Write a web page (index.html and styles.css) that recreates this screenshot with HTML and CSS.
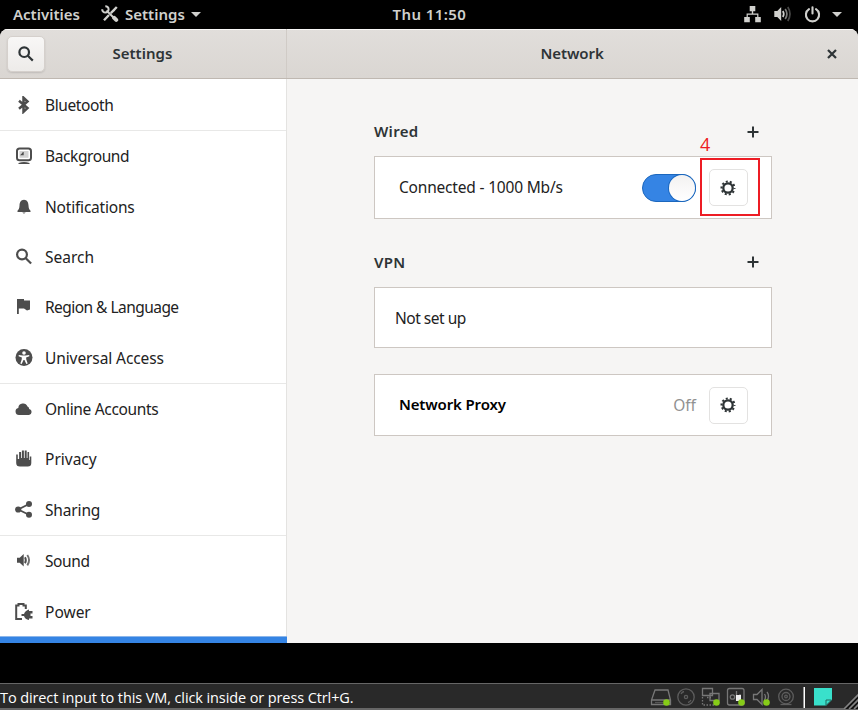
FILE: index.html
```html
<!DOCTYPE html>
<html lang="en">
<head>
<meta charset="utf-8">
<title>Settings – Network</title>
<link rel="stylesheet" href="styles.css">
</head>
<body>
<div class="screen">
  <header class="topbar">
    <span class="t-activities">Activities</span>
    <svg class="tools" width="18" height="18" viewBox="0 0 18 18"><g fill="none" stroke="#d0d0cd"><path d="M5.5 5.5L13 13" stroke-width="2"/><path d="M13.2 12.9l2 2" stroke-width="4" stroke-linecap="round"/><path d="M15.8 2L9.8 8.2M8 10l-5 5.3" stroke-width="2.4"/><path d="M4.3 1.2A3.2 3.2 0 1 1 1.2 4.3" stroke-width="2"/><path d="M12.2 4.7l1.3 1.3" stroke-width="2"/></g></svg>
    <span class="t-app">Settings</span>
    <i class="caret"></i>
    <span class="t-clock">Thu 11:50</span>
    <div class="tray">
      <svg width="17" height="17" viewBox="0 0 17 17"><path fill="#d0d0cd" d="M5.7 0h5.6v5.200H9.200v2.300h5.200V11h2.400v5.300h-5.600V11h2V8.700H3.800V11h2v5.300H.2V11h2.400V7.500h5.200V5.200H5.700z"/></svg>
      <svg width="18" height="16" viewBox="0 0 18 16"><path fill="#d0d0cd" d="M.3 5h3L7.2 1v14L3.300 11h-3z"/><g fill="none" stroke="#d0d0cd" stroke-width="1.700"><path d="M8.800 5q2 3 0 6"/><path opacity=".6" d="M11.200 3q3.400 5 0 10"/><path opacity=".35" d="M13.800 1q4.400 7 0 14"/></g></svg>
      <svg width="17" height="17" viewBox="0 0 17 17"><g fill="none" stroke="#d0d0cd" stroke-width="2.100" stroke-linecap="round"><path d="M5 3.200a6.600 6.600 0 1 0 7 0M8.500 1.200v6.300"/></g></svg>
      <i class="caret"></i>
    </div>
  </header>

  <div class="window">
    <div class="titlebar">
      <div class="title-left">
        <button class="search-btn"><svg width="16" height="16" viewBox="0 0 16 16"><g fill="none" stroke="#2e3436" stroke-width="2.200"><circle cx="6.200" cy="6.200" r="4.800"/><path d="M9.800 9.800l5 4.800"/></g></svg></button>
        <h1 class="t-settings">Settings</h1>
      </div>
      <div class="title-right">
        <h1 class="t-network">Network</h1>
        <svg class="close" width="10" height="10" viewBox="0 0 10 10"><path d="M1 1l8 8M9 1l-8 8" stroke="#2e3436" stroke-width="2.200"/></svg>
      </div>
    </div>

    <div class="body">
      <nav class="sidebar">
        <div class="group g1">
          <a><svg viewBox="0 0 18 18"><path d="M4 4.700l8.500 7.300-4 3.800V1.700l4 3.800L4 12.800" fill="none" stroke="#4d4d4d" stroke-width="2.500"/></svg><span class="n-bluetooth">Bluetooth</span></a>
        </div>
        <div class="group g5">
          <a><svg viewBox="0 0 18 18"><rect x="2" y="1.500" width="14" height="11.800" rx="2.600" fill="#fff" stroke="#4d4d4d" stroke-width="2"/><rect x="4.500" y="4" width="9" height="6.800" fill="#d2d2d2"/><path d="M5 8.200l3-2.900v2.900zM7.500 5h1.200v3.200H7.500z" fill="#4d4d4d"/><path d="M3.500 16q5.500-2.200 11 0v1h-11z" fill="#4d4d4d"/></svg><span class="n-background">Background</span></a>
          <a><svg viewBox="0 0 18 18"><path d="M9 1.800C5.800 2 4.700 4.400 4.500 7.500c-.2 3-.7 4-2 5.200V14h13v-1.300c-1.300-1.200-1.800-2.200-2-5.200C13.300 4.400 12.200 2 9 1.800zM7.300 14.500h3.400q-1.700 2-3.400 0z" fill="#4d4d4d"/></svg><span class="n-notifications">Notifications</span></a>
          <a><svg viewBox="0 0 18 18"><g fill="none" stroke="#4d4d4d" stroke-width="2.200"><circle cx="7" cy="6.500" r="4.900"/><path d="M10.500 10l5.600 5.500"/></g></svg><span>Search</span></a>
          <a><svg viewBox="0 0 18 18"><path d="M2 1h7v1.500h6v9l-3 1-3-2H3.800V16H2z" fill="#4d4d4d"/></svg><span class="n-region">Region &amp; Language</span></a>
          <a><svg viewBox="0 0 18 18"><circle cx="9" cy="8.500" r="8.500" fill="#4d4d4d"/><circle cx="9" cy="4" r="1.800" fill="#fff"/><path d="M3.800 6l3.700.6h3L14.200 6l.2 1.200-3.300 1.200.2 2.200 1.400 4-1.400.5L9.500 11h-1l-1.800 4.100-1.400-.5 1.400-4 .2-2.200-3.300-1.200z" fill="#fff"/></svg><span class="n-universal">Universal Access</span></a>
        </div>
        <div class="group g3">
          <a><svg viewBox="0 0 18 18"><path d="M4 15a3.600 3.600 0 0 1-.7-7.100A4.800 4.800 0 0 1 12.500 6.500 2.500 2.500 0 0 1 14.200 9 3.050 3.050 0 0 1 14 15z" fill="#4d4d4d"/></svg><span class="n-online">Online Accounts</span></a>
          <a><svg viewBox="0 0 18 18"><path d="M1.200 4.500h1.600V9h1.300V2h2v6h.8V.5h2V8h.8V.5h2V8h.8V2h1.600v8h.7V6.500h1.500V13q0 3.500-3.500 3.500H5Q1.200 16.500 1.200 13z" fill="#4d4d4d"/></svg><span>Privacy</span></a>
          <a><svg viewBox="0 0 18 18"><g fill="#4d4d4d"><circle cx="3.200" cy="8.500" r="3.100"/><circle cx="14" cy="3" r="3"/><circle cx="14" cy="13.800" r="3"/></g><path d="M14 3L3.200 8.500 14 13.800" fill="none" stroke="#4d4d4d" stroke-width="1.800"/></svg><span class="n-sharing">Sharing</span></a>
        </div>
        <div class="group g2">
          <a><svg viewBox="0 0 18 18"><path fill="#4d4d4d" d="M2 5.700h2.700L8.700 2v12.400l-4-3.600H2z"/><g fill="none" stroke="#4d4d4d" stroke-width="1.900"><path d="M10 5.200q1.700 3 0 6"/><path opacity=".8" d="M12.300 3q3.600 5.200 0 10.400"/></g></svg><span class="n-sound">Sound</span></a>
          <a><svg viewBox="0 0 18 18"><path d="M7 16H1.200V2.500h2.300V1h5v1.500h2.300V6" fill="none" stroke="#4d4d4d" stroke-width="2"/><path d="M6.500 11H9q1-3.500 5-4.500V8h3.500v2.500h-2v2.500h2v2.500H14V17q-4-.5-5-4H6.500z" fill="#4d4d4d"/></svg><span>Power</span></a>
        </div>
        <div class="selected"></div>
      </nav>

      <main class="content">
        <div class="head"><h2 class="t-wired">Wired</h2><svg width="12" height="12" viewBox="0 0 12 12"><path d="M6 .5v11M.5 6h11" stroke="#2e3436" stroke-width="2"/></svg></div>
        <section class="card wired">
          <span class="t-conn">Connected - 1000 Mb/s</span>
          <div class="switch"><i></i></div>
          <button class="gear"><svg width="16" height="16" viewBox="0 0 16 16"><g fill="none" stroke="#2e3436"><circle cx="8" cy="8" r="4.700" stroke-width="2.300"/><circle cx="8" cy="8" r="6.500" stroke-width="2" stroke-dasharray="2.050 2.034" stroke-dashoffset="1.025"/></g></svg></button>
          <div class="mark"></div><b class="num">4</b>
        </section>
        <div class="head vpn"><h2 class="t-vpn">VPN</h2><svg width="12" height="12" viewBox="0 0 12 12"><path d="M6 .5v11M.5 6h11" stroke="#2e3436" stroke-width="2"/></svg></div>
        <section class="card empty"><span class="t-not">Not set up</span></section>
        <section class="card proxy">
          <strong class="t-proxy">Network Proxy</strong>
          <span class="t-off">Off</span>
          <button class="gear"><svg width="16" height="16" viewBox="0 0 16 16"><g fill="none" stroke="#2e3436"><circle cx="8" cy="8" r="4.700" stroke-width="2.300"/><circle cx="8" cy="8" r="6.500" stroke-width="2" stroke-dasharray="2.050 2.034" stroke-dashoffset="1.025"/></g></svg></button>
        </section>
      </main>
    </div>
  </div>

  <footer class="status">
    <span class="t-status">To direct input to this VM, click inside or press Ctrl+G.</span>
    <svg class="devices" width="208" height="25" viewBox="650 684 208 25">
      <g fill="none" stroke="#777" stroke-width="1.300">
        <path d="M655 690h13l2.500 10v4.500h-19V700zM651.500 700h19"/><path d="M655 702.500h8" stroke="#555"/>
        <g stroke="#5d5d5d"><circle cx="686" cy="697" r="8.200"/><circle cx="686" cy="697" r="1.600"/><path d="M681 694q1-2 3-2.500M691 700q-1 2-3 2.500"/></g>
        <path d="M702.500 688.500h10v7h-10zM710 693.500h9v7h-9z"/><path d="M707 697.500h4M702.500 697v8h13" stroke-dasharray="1.500 1.500"/>
        <rect x="727.500" y="688.500" width="16.500" height="16.500" rx="2"/><circle cx="732.500" cy="697" r="2.200"/><path d="M736.500 691v10M740 694v5"/>
        <path d="M753.500 694.500h3.500l5-5v15l-5-5h-3.500zM764.500 694q2 3 0 6M767 692q3 4 0 9"/>
        <g stroke="#5d5d5d"><circle cx="786" cy="696.500" r="7.300"/><circle cx="786" cy="696.500" r="4"/><circle cx="786" cy="696.500" r="1.300"/><path d="M780.500 704.500h11"/></g>
      </g>
      <path d="M736 695h5v6h-5z" fill="#fff" opacity=".9"/>
      <g fill="#86cb18"><circle cx="666.500" cy="702.500" r="3.300"/><circle cx="716.500" cy="702.500" r="3.300"/><circle cx="741.500" cy="702.500" r="3.300"/><circle cx="766.500" cy="702.500" r="3.300"/></g>
      <path d="M803.500 687h1.500v21h-1.500z" fill="#fff"/>
      <path d="M814 688h18v11.500l-6 6h-12z" fill="#39e0cb"/><path d="M826 705.500V700h5.500z" fill="#39e0cb" stroke="#22685f" stroke-width="1"/>
      <path d="M844 709l14-14v14z" fill="#111"/><path d="M844 709l15-15M849 709l10-10M854 709l5-5" stroke="#858585" stroke-width="1.600"/>
    </svg>
  </footer>
</div>
</body>
</html>
```
FILE: styles.css
```css
* { box-sizing: border-box; }
body { margin: 0; background: #000; font: 15.5px/20px "Noto Sans", "Open Sans", sans-serif; color: #2e3436; overflow: hidden; }
h1, h2 { margin: 0; font-size: 15px; line-height: 20px; font-weight: 600; }
button { padding: 0; display: grid; place-items: center; }
svg { display: block; flex: none; }
span, h1, h2, strong { white-space: nowrap; }
.screen { width: 858px; height: 710px; display: flex; flex-direction: column; }

.topbar { height: 29px; display: flex; align-items: center; color: #d0d0cd; font-size: 15px; font-weight: 600; padding: 0 16px 1px 13px; flex: none; }
.tools { margin-left: 21px; margin-right: 6px; }
.t-activities { width: 67px; }
.t-app { width: 61px; }
.topbar .caret { border: 5px solid transparent; border-top-color: #d0d0cd; border-bottom: 0; margin-left: 5px; }
.t-clock { margin-left: 191.5px; letter-spacing: .4px; }
.tray { margin-left: auto; display: flex; align-items: center; }
.tray svg:nth-child(2) { margin-left: 13px; }
.tray svg:nth-child(3) { margin-left: 12px; }
.tray .caret { margin-left: 11px; }

.window { height: 614px; background: #f6f5f4; border-radius: 8px 8px 0 0; overflow: hidden; flex: none; }
.titlebar { height: 50px; display: flex; background: linear-gradient(#e1dedb, #dad6d2); border-bottom: 1px solid #bfb8b1; box-shadow: inset 0 1px #f9f8f7; }
.titlebar h1 { padding-bottom: 2px; }
.title-left { width: 287px; border-right: 1px solid #d0cbc6; display: flex; align-items: center; padding-left: 7px; }
.search-btn { width: 38px; height: 36px; border: 1px solid #d5d0cc; border-radius: 5px; background: linear-gradient(#f8f7f6, #edebe9); box-shadow: 0 1px 2px rgba(0,0,0,.13); }
.t-settings { margin-left: 67.5px; }
.title-right { flex: 1; display: flex; align-items: center; padding-left: 253.5px; padding-right: 21px; }
.t-network { letter-spacing: -.1px; }
.close { margin-left: auto; }

.body { display: flex; height: 564px; }
.sidebar { width: 287px; background: #fff; border-right: 1px solid #e4e3e1; display: flex; flex-direction: column; }
.group { display: flex; flex-direction: column; border-bottom: 1px solid #e8e8e7; }
.group a { flex: 1; display: flex; align-items: center; padding-left: 15px; gap: 12px; color: #222; }
.group svg { width: 18px; height: 18px; }
.g1 { height: 52px; }
.g5 { height: 253px; }
.g3 { height: 152px; }
.g2 { height: 101px; border: 0; margin-bottom: -1px; }
.selected { flex: 1; margin-right: -1px; background: #3584e4; border-top: 1px solid #8cb6ea; }
.n-bluetooth { letter-spacing: -.4px; }
.n-background { letter-spacing: -.4px; }
.n-notifications { letter-spacing: -.2px; }
.n-region { letter-spacing: -.54px; }
.n-universal { letter-spacing: -.1px; }
.n-online { letter-spacing: -.33px; }
.n-sharing { letter-spacing: -.15px; }
.n-sound { letter-spacing: -.4px; }

.content { width: 398px; margin-left: 87px; padding-top: 28px; }
.head { height: 49px; display: flex; justify-content: space-between; align-items: center; padding-right: 13px; }
.head h2 { padding-bottom: 1px; letter-spacing: .3px; }
.vpn { height: 68px; padding-top: 18px; }
.card { background: #fff; border: 1px solid #cdc7c2; display: flex; align-items: center; position: relative; color: #222; }
.wired { height: 63px; padding: 0 23px 0 24px; }
.empty { height: 61px; padding-left: 20px; }
.proxy { height: 62px; padding: 0 23px 0 24px; margin-top: 26px; }
.t-conn { letter-spacing: -.19px; padding-bottom: 1px; }
.t-not { letter-spacing: -.48px; }
.t-proxy { color: #000; font-size: 15px; font-weight: 600; letter-spacing: -.15px; padding-bottom: 2px; }
.t-off { color: #919191; margin-left: auto; }
.gear { width: 39px; height: 37px; border: 1px solid #e3e2e1; border-radius: 5px; background: #fff; margin-left: 13px; padding-right: 1px; }
.switch { width: 54px; height: 28px; border-radius: 14px; border: 1px solid #1c67bd; background: #3584e4; margin-left: auto; display: flex; justify-content: flex-end; }
.switch i { width: 26px; height: 26px; border-radius: 50%; background: linear-gradient(#f3f2f1, #fff); box-shadow: 0 0 0 1px #1c67bd; }
.mark { position: absolute; left: 325px; top: 1px; width: 60px; height: 58px; border: 2px solid #ed1c24; }
.num { position: absolute; left: 325px; top: -23px; color: #ed1c24; font: 18px/20px "Open Sans", sans-serif; }

.status { margin-top: 40px; height: 27px; background: #292929; border-top: 1px solid #666; border-bottom: 2px solid #666; display: flex; justify-content: space-between; align-items: center; color: #fff; }
.t-status { font: 14.5px/20px "Open Sans", sans-serif; letter-spacing: -.105px; padding-top: 3px; }
```
